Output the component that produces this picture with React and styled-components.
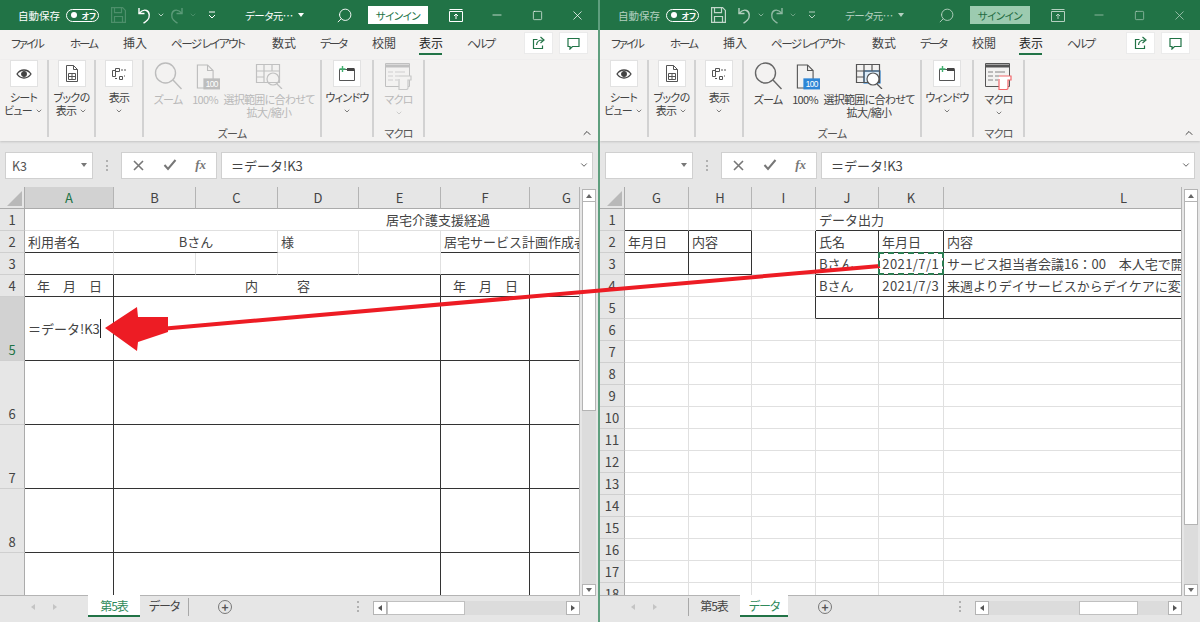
import React from "react";
import styled, { createGlobalStyle } from "styled-components";
import { ChevronDown, ChevronUp, Minus, Search, Square, X } from "lucide-react";

const GREEN = "#217346";
const UI_FONT = `"Noto Sans CJK JP", "Noto Sans", sans-serif`;

const GlobalStyle = createGlobalStyle`
  html, body {
    margin: 0;
    height: 100%;
    overflow: hidden;
    background: #e6e6e6;
    font-family: ${UI_FONT};
  }
`;

const Screen = styled.div`
  position: relative;
  display: flex;
  width: 1200px;
  height: 622px;
  overflow: hidden;
`;

const Win = styled.div`
  display: flex;
  flex-direction: column;
  flex: none;
  width: ${(p) => p.$w}px;
  height: 622px;
  overflow: hidden;
`;

const Divider = styled.div`
  flex: none;
  width: 2px;
  background: #5f9f7e;
`;

/* title bar */
const TitleBar = styled.div`
  display: flex;
  align-items: center;
  flex: none;
  height: 30px;
  padding-left: 18px;
  background: ${GREEN};
  color: ${(p) => (p.$off ? "#b4d0c0" : "#fff")};
  font-size: 11px;
  font-feature-settings: "palt";
  white-space: nowrap;
`;

const AutoSave = styled.span`
  flex: none;
  width: 42px;
  font-size: 10.5px;
`;

const Slot = styled.div`
  display: flex;
  align-items: center;
  justify-content: center;
  flex: none;
  width: ${(p) => p.$w}px;
  height: 30px;
  color: ${(p) => p.$color || "inherit"};
`;

const Toggle = styled.div`
  display: flex;
  align-items: center;
  gap: 5px;
  box-sizing: border-box;
  width: 33px;
  height: 13px;
  padding-left: 4px;
  border: 1px solid #fff;
  border-radius: 7px;
  color: #fff;
  font-size: 8px;
  font-weight: 700;
  &::before {
    content: "";
    width: 6px;
    height: 6px;
    border-radius: 50%;
    background: #fff;
  }
`;

const DocName = styled.div`
  display: flex;
  align-items: center;
  gap: 5px;
  margin-left: 19px;
  font-size: 10.5px;
  letter-spacing: -0.5px;
`;

const SignIn = styled.div`
  display: flex;
  align-items: center;
  justify-content: center;
  flex: none;
  width: 60px;
  height: 18px;
  margin: 0 14px 0 10px;
  background: ${(p) => (p.$off ? "#9ccbb0" : "#fff")};
  color: ${(p) => (p.$off ? "#1f6b42" : GREEN)};
  font-size: 10.5px;
  letter-spacing: -0.5px;
`;

const Spacer = styled.div`
  flex: 1;
`;

const Lens = styled(Search)`
  transform: scaleX(-1);
`;

/* menu tabs */
const MenuRow = styled.div`
  display: flex;
  flex: none;
  gap: 25px;
  height: 30px;
  padding-left: 11px;
  background: #f3f2f1;
  color: #444;
  font-size: 12px;
  font-feature-settings: "palt";
  white-space: nowrap;
`;

const MenuItem = styled.div`
  box-sizing: border-box;
  flex: none;
  width: ${(p) => p.$w}px;
  height: 25px;
  padding-top: 5px;
  line-height: 16px;
  border-bottom: 2px solid ${(p) => (p.$on ? GREEN : "transparent")};
  color: ${(p) => (p.$on ? "#222" : "#444")};
  letter-spacing: ${(p) => p.$tight || 0}px;
  font-size: ${(p) => (p.$tight ? 11.5 : 12)}px;
`;

const MenuActions = styled.div`
  display: flex;
  flex: none;
  gap: 8px;
  margin: 3px 11px 0 auto;
`;

const ActionButton = styled.div`
  display: flex;
  align-items: center;
  justify-content: center;
  width: 27px;
  height: 20px;
  background: #fff;
  box-shadow: 0 0 0 1px #ebebeb;
`;

/* ribbon */
const Ribbon = styled.div`
  position: relative;
  display: flex;
  flex: none;
  box-sizing: border-box;
  height: 81px;
  padding-bottom: 4px;
  background: #f3f2f1;
  box-shadow: 0 1px 2px #c4c4c4;
`;

const Group = styled.div`
  display: flex;
  flex-direction: column;
  flex: none;
  box-sizing: border-box;
  width: ${(p) => p.$w}px;
  border-right: 2px solid #d2d2d2;
`;

const GroupButtons = styled.div`
  display: flex;
  flex: 1;
  padding-left: ${(p) => p.$pad || 0}px;
`;

const GroupName = styled.div`
  height: 12px;
  color: #555;
  font-size: 11px;
  letter-spacing: -0.8px;
  line-height: 16px;
  text-align: center;
  font-feature-settings: "palt";
`;

const RibbonButton = styled.div`
  display: flex;
  flex-direction: column;
  align-items: center;
  flex: none;
  width: ${(p) => p.$w}px;
  color: ${(p) => (p.$off ? "#b9b9b9" : "#444")};
  font-size: 11px;
  letter-spacing: -0.7px;
  line-height: 13px;
  font-feature-settings: "palt";
  white-space: nowrap;
`;

const IconBox = styled.div`
  display: flex;
  align-items: center;
  justify-content: center;
  box-sizing: border-box;
  width: 28px;
  height: 27px;
  margin-bottom: 4px;
  background: #fff;
  border: 1px solid #e2e2e2;
`;

const PlainIcon = styled.div`
  display: flex;
  align-items: center;
  justify-content: center;
  height: 28px;
  margin: 2px 0 3px ${(p) => p.$shift || 0}px;
`;

const LabelLine = styled.div`
  display: flex;
  align-items: center;
  justify-content: center;
  gap: 3px;
  height: 13px;
`;

const Collapse = styled.div`
  display: flex;
  align-self: flex-end;
  margin: 0 5px -2px auto;
  color: #333;
`;

/* formula bar */
const FormulaBar = styled.div`
  display: flex;
  align-items: center;
  flex: none;
  box-sizing: border-box;
  height: 46px;
  padding: 2px 5px 0;
  background: #e6e6e6;
`;

const NameBox = styled.div`
  display: flex;
  align-items: center;
  box-sizing: border-box;
  flex: none;
  width: 88px;
  height: 27px;
  padding: 0 5px 0 6px;
  background: #fff;
  border: 1px solid #d0d0d0;
  color: #555;
  font-size: 12.5px;
`;

const Caret = styled.span`
  width: 0;
  height: 0;
  margin-left: auto;
  border: 3.5px solid transparent;
  border-top: 4px solid #777;
  border-bottom: 0;
`;

const Grip = styled.div`
  flex: none;
  width: 1px;
  height: 11px;
  margin: 0 12px 0 13px;
  border-left: 2px dotted #b0b0b0;
`;

const FxBox = styled.div`
  display: flex;
  align-items: center;
  justify-content: space-between;
  box-sizing: border-box;
  flex: none;
  width: 96px;
  height: 27px;
  padding: 0 10px;
  background: #fff;
  border: 1px solid #d0d0d0;
  color: #777;
`;

const FxLabel = styled.span`
  font-family: "Liberation Serif", serif;
  font-size: 13px;
  font-style: italic;
  font-weight: 700;
`;

const FormulaInput = styled.div`
  display: flex;
  align-items: center;
  justify-content: space-between;
  box-sizing: border-box;
  flex: 1;
  height: 27px;
  margin-left: 4px;
  padding: 0 3px 0 9px;
  background: #fff;
  border: 1px solid #d0d0d0;
  color: #444;
  font-size: 13px;
`;

/* sheet */
const SheetArea = styled.div`
  display: flex;
  flex: 1;
  min-height: 0;
`;

const SheetGrid = styled.div`
  display: grid;
  align-content: start;
  flex: 1;
  min-width: 0;
  grid-template-columns: ${(p) => p.$cols};
  grid-template-rows: ${(p) => p.$rows};
  overflow: hidden;
  background: #fff;
  border-right: 1px solid #b4b4b4;
  border-bottom: 1px solid #b4b4b4;
  color: #444;
  font-size: 13px;
`;

const Corner = styled.div`
  position: relative;
  background: #e6e6e6;
  border-right: 1px solid #ababab;
  border-bottom: 1px solid #ababab;
  &::after {
    content: "";
    position: absolute;
    left: 7px;
    top: 4px;
    width: 15px;
    height: 15px;
    background: #b9b9b9;
    clip-path: polygon(100% 0, 100% 100%, 0 100%);
  }
`;

const ColHead = styled.div`
  display: flex;
  align-items: center;
  justify-content: center;
  background: ${(p) => (p.$on ? "#d2d2d2" : "#e6e6e6")};
  border-right: 1px solid #b4b4b4;
  border-bottom: 1px solid #ababab;
  color: ${(p) => (p.$on ? GREEN : "#444")};
`;

const RowHead = styled.div`
  display: flex;
  align-items: ${(p) => (p.$tall ? "flex-end" : "center")};
  justify-content: center;
  background: ${(p) => (p.$on ? "#d2d2d2" : "#e6e6e6")};
  border-right: 1px solid #ababab;
  border-bottom: 1px solid #cfcfcf;
  color: ${(p) => (p.$on ? GREEN : "#444")};
  line-height: 20px;
`;

const lineColor = { line: "#333", grid: "#e0e0e0", none: "transparent" };

const Cell = styled.div`
  position: relative;
  display: flex;
  align-items: center;
  justify-content: ${(p) => p.$align || "flex-start"};
  grid-column: span ${(p) => p.$span || 1};
  min-width: 0;
  padding: 0 ${(p) => (p.$align === "flex-end" ? 4 : 2)}px 1px 3px;
  overflow: hidden;
  border-right: 1px solid ${(p) => lineColor[p.$r || "grid"]};
  border-bottom: 1px solid ${(p) => lineColor[p.$b || "grid"]};
  letter-spacing: ${(p) => (p.$align === "flex-end" ? 0.4 : 0)}px;
  white-space: nowrap;
  ${(p) =>
    p.$copy &&
    `
    overflow: visible;
    z-index: 1;
    &::after {
      content: "";
      position: absolute;
      inset: -1px -1px -1px -1px;
      border: 2px dashed #2b7d52;
    }
  `}
`;

const Cursor = styled.span`
  flex: none;
  width: 1px;
  height: 19px;
  background: #222;
`;

const VBar = styled.div`
  display: flex;
  flex-direction: column;
  flex: none;
  box-sizing: border-box;
  width: 18px;
  padding: 2px 2px 0 2px;
  background: #e6e6e6;
`;

const ScrollButton = styled.div`
  display: flex;
  align-items: center;
  justify-content: center;
  box-sizing: border-box;
  flex: none;
  width: 14px;
  height: ${(p) => p.$h || 13}px;
  background: #fff;
  border: 1px solid #b4b4b4;
  color: #666;
`;

const VThumb = styled.div`
  box-sizing: border-box;
  flex: none;
  width: 14px;
  height: ${(p) => p.$h}px;
  background: #fff;
  border: 1px solid #b4b4b4;
  border-top: 0;
`;

const VTrack = styled.div`
  flex: 1;
  width: 14px;
  background: #dcdcdc;
`;

const opposite = { top: "bottom", bottom: "top", left: "right", right: "left" };

const Arrow = styled.span`
  width: 0;
  height: 0;
  border: 3px solid transparent;
  border-${(p) => p.$to}: 0;
  border-${(p) => opposite[p.$to]}: 4px solid ${(p) => p.$color || "#555"};
`;

/* sheet tabs */
const TabBar = styled.div`
  display: flex;
  align-items: flex-start;
  flex: none;
  height: 26px;
  background: #e6e6e6;
  color: #444;
  font-size: 12px;
  font-feature-settings: "palt";
`;

const TabNav = styled.div`
  display: flex;
  align-items: center;
  justify-content: center;
  gap: 18px;
  flex: none;
  box-sizing: border-box;
  width: 88px;
  height: 21px;
`;

const SheetTab = styled.div`
  display: flex;
  align-items: center;
  justify-content: center;
  box-sizing: border-box;
  flex: none;
  width: ${(p) => p.$w}px;
  height: ${(p) => (p.$on ? 22 : 21)}px;
  margin-top: ${(p) => (p.$on ? -1 : 0)}px;
  background: ${(p) => (p.$on ? "#fff" : "transparent")};
  border-bottom: 2px solid ${(p) => (p.$on ? GREEN : "transparent")};
  color: ${(p) => (p.$on ? "#2f8a5b" : "#444")};
  letter-spacing: -1.1px;
`;

const TabSep = styled.div`
  flex: none;
  width: 1px;
  height: 18px;
  margin: 2px -1px 0 0;
  background: #a8a8a8;
`;

const AddSheet = styled.div`
  display: flex;
  align-items: center;
  justify-content: center;
  flex: none;
  box-sizing: border-box;
  width: 14px;
  height: 14px;
  margin: 4px 0 0 30px;
  border: 1px solid #777;
  border-radius: 50%;
  color: #555;
  font-size: 12px;
  font-weight: 700;
  line-height: 12px;
`;

const HGrip = styled.div`
  flex: none;
  width: 1px;
  height: 11px;
  margin: 5px 13px 0 0;
  border-left: 2px dotted #b0b0b0;
`;

const HBar = styled.div`
  display: flex;
  flex: none;
  width: 207px;
  height: 14px;
  margin: 5px 18px 0 0;
  background: #dcdcdc;
`;

const HGap = styled.div`
  flex: none;
  width: ${(p) => p.$w}px;
`;

const HThumb = styled.div`
  box-sizing: border-box;
  flex: none;
  width: ${(p) => p.$w}px;
  background: #fff;
  border: 1px solid #c0c0c0;
`;

const Overlay = styled.svg`
  position: absolute;
  left: 0;
  top: 0;
  pointer-events: none;
`;

const Chev = ({ size = 9 }) => <ChevronDown size={size} strokeWidth={2} />;

/* icons */
const SaveIcon = ({ color }) => (
  <svg width="15" height="16" viewBox="0 0 15 16" fill="none" stroke={color} strokeWidth="1.2">
    <path d="M.6.6h11l2.8 2.8v12H.6z" />
    <path d="M3.5.6v5h7v-5M3.500 15.400V9.500h8v5.900" />
  </svg>
);

const UndoIcon = ({ color, flip }) => (
  <svg width="14" height="17" viewBox="0 0 14 17" fill="none" stroke={color} strokeWidth="1.4" transform={flip ? "scale(-1 1)" : undefined}>
    <path d="M2 1v5.500h5.500" />
    <path d="M2 6.500c2.500-3 5-4 7.500-3 3.500 1.500 3.500 7 1 9.500-1 1-2.500 2.500-4 3" />
  </svg>
);

const CustomizeIcon = () => (
  <svg width="8" height="8" viewBox="0 0 8 8" fill="none" stroke="currentColor">
    <path d="M1 1h6M1 4l3 3 3-3" />
  </svg>
);

const DisplayOptionsIcon = ({ color }) => (
  <svg width="14" height="13" viewBox="0 0 14 13" fill="none" stroke={color} strokeWidth="1">
    <path d="M.5 2.500h13v10H.5z" />
    <path d="M.5 .5h13M7 10V5M5 7l2-2 2 2" />
  </svg>
);

const ShareIcon = () => (
  <svg width="14" height="14" viewBox="0 0 14 14" fill="none" stroke={GREEN} strokeWidth="1.2">
    <path d="M5.500 3.500H1.500v9h9v-3" />
    <path d="M4.500 9c.3-3 2.500-5 6-5M8.500 1l3.500 3-3.500 3" />
  </svg>
);

const CommentIcon = () => (
  <svg width="13" height="13" viewBox="0 0 13 13" fill="none" stroke={GREEN} strokeWidth="1.2">
    <path d="M1 1.500h11v8H5.500L3 12V9.500H1z" />
  </svg>
);

const EyeIcon = () => (
  <svg width="16" height="12" viewBox="0 0 16 12" fill="none" stroke="#444" strokeWidth="1.3">
    <path d="M1 6c2-3 4.300-4 7-4s5 1 7 4c-2 3-4.300 4-7 4s-5-1-7-4z" />
    <circle cx="8" cy="6" r="2.300" fill="#444" />
  </svg>
);

const BookIcon = () => (
  <svg width="14" height="17" viewBox="0 0 14 17" fill="none" stroke="#555" strokeWidth="1">
    <path d="M1.500.5h7l4 4v12h-11z" />
    <path d="M8.500.5v4h4" />
    <path d="M3.500 8.500h7v6h-7zM3.500 11.500h7M7 8.500v6" />
  </svg>
);

const ViewsIcon = () => (
  <svg width="16" height="14" viewBox="0 0 16 14" fill="none" stroke="#555" strokeWidth="1">
    <path d="M1.500 3.500h3v6h-3zM4.500 1.500h4v3h-4zM8.500 9.500h3v3h-3z" />
    <path d="M10 3h5M13 9h1M4 11.500h2" strokeDasharray="2 1" />
  </svg>
);

const MagnifierIcon = ({ off }) => {
  const c = off ? "#bcbcbc" : "#666";
  return (
    <svg width="28" height="28" viewBox="0 0 28 28" fill="none" stroke={c} strokeWidth="1.4">
      <circle cx="11.500" cy="11" r="10" />
      <path d="M19 18l8.500 9" />
    </svg>
  );
};

const FullSizeIcon = ({ off }) => {
  const c = off ? "#bcbcbc" : "#555";
  return (
    <svg width="24" height="27" viewBox="0 0 26 28">
      <path d="M1.500 1.500h11l6 6v19h-17z" fill="none" stroke={c} strokeWidth="1.200" />
      <path d="M12.500 1.500v6h6" fill="none" stroke={c} strokeWidth="1.200" />
      <rect x="8" y="16" width="18" height="12" fill={off ? "#bdbdbd" : "#2e86d6"} />
      <text x="17" y="25.500" fill="#fff" fontSize="9" textAnchor="middle" fontFamily="Liberation Sans, sans-serif">
        100
      </text>
    </svg>
  );
};

const FitIcon = ({ off }) => {
  const c = off ? "#c0c0c0" : "#555";
  return (
    <svg width="28" height="26" viewBox="0 0 28 26" fill="none" stroke={c} strokeWidth="1.200">
      {!off && <rect x="9" y="8" width="16" height="12" fill="#dcecf9" stroke="#2e86d6" />}
      <path d="M1.500 1.500h23v18h-23zM1.500 8h23M1.500 14h8M9 1.500v18M17 1.500V8" />
      <circle cx="18" cy="16" r="6" fill={off ? "none" : "#fff"} />
      <path d="M22 21l5 5" />
    </svg>
  );
};

const WindowIcon = () => (
  <svg width="16" height="15" viewBox="0 0 16 15" fill="none">
    <path d="M.5 3.500h15v11H.5z" stroke="#555" />
    <path d="M8 3.500h7.500" stroke="#444" strokeWidth="3" />
    <path d="M3.500 0v6M.5 3h6" stroke="#3fae6d" strokeWidth="1.400" />
  </svg>
);

const MacroIcon = ({ off }) => {
  const c = off ? "#c0c0c0" : "#555";
  const red = off ? "#c8c8c8" : "#f2666a";
  return (
    <svg width="27" height="27" viewBox="0 0 27 27" fill="none" stroke={c}>
      <path d="M.5 .5h24v23H.5z" />
      <path d="M.5 3h24" strokeWidth="3" />
      <path d="M3 9h5M10 9h10M3 13h5M10 13h4M3 17h5M10 17h3" opacity="0.7" />
      <path d="M14 13h12v4h-3v8c0 1-1 1.500-2 1.500h-7V16" fill={off ? "#f3f2f1" : "#fff"} stroke={red} strokeWidth="1.200" />
    </svg>
  );
};

const CancelIcon = () => (
  <svg width="13" height="13" viewBox="0 0 13 13" stroke="#777" strokeWidth="1.600">
    <path d="M2 2l9 9M11 2l-9 9" />
  </svg>
);

const EnterIcon = () => (
  <svg width="14" height="12" viewBox="0 0 14 12" fill="none" stroke="#777" strokeWidth="2">
    <path d="M1.500 6l3.500 4 7.500-9" />
  </svg>
);

/* sheet data */
const blackCell = { r: "line", b: "line" };

const leftSheet = {
  colTemplate: "25px 89px 82px 82px 81px 82px 89px 74px 247px",
  rowTemplate: "22px 22px 22px 22px 22px 64px 64px 64px 64px 64px",
  headers: ["A", "B", "C", "D", "E", "F", "G", ""],
  activeCol: "A",
  activeRow: 5,
  tallFrom: 5,
  rows: [
    [{ t: "居宅介護支援経過", span: 8, align: "center" }],
    [
      { t: "利用者名", b: "line" },
      { t: "Bさん", span: 2, align: "center", b: "line" },
      { t: "様" },
      {},
      { t: "居宅サービス計画作成者", span: 3, b: "line", r: "none" },
    ],
    [{ b: "line" }, { b: "line" }, { b: "line" }, { b: "line" }, { b: "line" }, { b: "line" }, { b: "line", r: "none" }, { b: "line", r: "none" }],
    [
      { t: "年　月　日", align: "center", ...blackCell },
      { t: "内　　　容", span: 4, align: "center", ...blackCell },
      { t: "年　月　日", align: "center", ...blackCell },
      blackCell,
      { b: "line", r: "none" },
    ],
    [
      { t: "＝データ!K3", cursor: true, ...blackCell },
      { span: 4, ...blackCell },
      blackCell,
      blackCell,
      { b: "line", r: "none" },
    ],
    ...[6, 7, 8, 9].map(() => [
      blackCell,
      { span: 4, ...blackCell },
      blackCell,
      blackCell,
      { b: "line", r: "none" },
    ]),
  ],
};

const plainRow = [{}, {}, {}, {}, {}, { r: "none" }];

const rightSheet = {
  colTemplate: "25px 64px 63px 64px 63px 65px 360px",
  rowTemplate: "repeat(19, 22px)",
  headers: ["G", "H", "I", "J", "K", "L"],
  rows: [
    [
      { b: "line" },
      { b: "line" },
      {},
      { t: "データ出力", span: 2, b: "line" },
      { b: "line", r: "none" },
    ],
    [
      { t: "年月日", ...blackCell },
      { t: "内容", ...blackCell },
      { r: "line" },
      { t: "氏名", ...blackCell },
      { t: "年月日", ...blackCell },
      { t: "内容", b: "line", r: "none" },
    ],
    [
      blackCell,
      blackCell,
      { r: "line" },
      { t: "Bさん", ...blackCell },
      { t: "2021/7/1", align: "flex-end", copy: true, ...blackCell },
      { t: "サービス担当者会議16：00　本人宅で開催", b: "line", r: "none" },
    ],
    [
      {},
      {},
      { r: "line" },
      { t: "Bさん", ...blackCell },
      { t: "2021/7/3", align: "flex-end", ...blackCell },
      { t: "来週よりデイサービスからデイケアに変更", b: "line", r: "none" },
    ],
    [{}, {}, { r: "line" }, blackCell, blackCell, { b: "line", r: "none" }],
    ...Array.from({ length: 13 }, () => plainRow),
  ],
};

function Sheet({ data }) {
  return (
    <SheetGrid $cols={data.colTemplate} $rows={data.rowTemplate}>
      <Corner />
      {data.headers.map((h) => (
        <ColHead key={h} $on={h === data.activeCol}>
          {h}
        </ColHead>
      ))}
      {data.rows.map((row, i) => (
        <React.Fragment key={i}>
          <RowHead $on={i + 1 === data.activeRow} $tall={data.tallFrom && i + 1 >= data.tallFrom}>
            {i + 1}
          </RowHead>
          {row.map((c, j) => (
            <Cell key={j} $span={c.span} $align={c.align} $r={c.r} $b={c.b} $copy={c.copy}>
              {c.t}
              {c.cursor && <Cursor />}
            </Cell>
          ))}
        </React.Fragment>
      ))}
    </SheetGrid>
  );
}

function Window({ w, inactive, nameBox, data, vThumb, hStart, hThumb, activeTab }) {
  const off = inactive;
  const iconColor = off ? "#b4d0c0" : "#fff";
  const dimColor = off ? "#8fb8a2" : "#5b9a78";
  const toolsOff = !off;
  return (
    <Win $w={w}>
      <TitleBar $off={off}>
        <AutoSave>自動保存</AutoSave>
        <Slot $w={44} $color="#fff">
          <Toggle>オフ</Toggle>
        </Slot>
        <Slot $w={28}>
          <SaveIcon color={off ? "#c2d8cb" : "#4d8f6b"} />
        </Slot>
        <Slot $w={23}>
          <UndoIcon color={iconColor} />
        </Slot>
        <Slot $w={11}>
          <Chev size={8} />
        </Slot>
        <Slot $w={22}>
          <UndoIcon color={dimColor} flip />
        </Slot>
        <Slot $w={10} $color={dimColor}>
          <Chev size={8} />
        </Slot>
        <Slot $w={28}>
          <CustomizeIcon />
        </Slot>
        <DocName>
          データ元…
          <Arrow $to="bottom" $color={iconColor} />
        </DocName>
        <Spacer />
        <Slot $w={28}>
          <Lens size={17} strokeWidth={1.3} color={iconColor} />
        </Slot>
        <SignIn $off={off}>サインイン</SignIn>
        <Slot $w={28}>
          <DisplayOptionsIcon color={iconColor} />
        </Slot>
        <Slot $w={7} />
        <Slot $w={40}>
          <Minus size={14} strokeWidth={1.2} color={iconColor} />
        </Slot>
        <Slot $w={40}>
          <Square size={11} strokeWidth={1.4} color={iconColor} />
        </Slot>
        <Slot $w={41}>
          <X size={15} strokeWidth={1.2} color={iconColor} />
        </Slot>
      </TitleBar>

      <MenuRow>
        <MenuItem $w={34} $tight={-2}>ファイル</MenuItem>
        <MenuItem $w={28} $tight={-2}>ホーム</MenuItem>
        <MenuItem $w={23}>挿入</MenuItem>
        <MenuItem $w={76} $tight={-1.5}>ページ レイアウト</MenuItem>
        <MenuItem $w={23}>数式</MenuItem>
        <MenuItem $w={27} $tight={-2}>データ</MenuItem>
        <MenuItem $w={22}>校閲</MenuItem>
        <MenuItem $w={23} $on>表示</MenuItem>
        <MenuItem $w={29} $tight={-2}>ヘルプ</MenuItem>
        <MenuActions>
          <ActionButton>
            <ShareIcon />
          </ActionButton>
          <ActionButton>
            <CommentIcon />
          </ActionButton>
        </MenuActions>
      </MenuRow>

      <Ribbon>
        <Group $w={49}>
          <GroupButtons>
            <RibbonButton $w={47}>
              <IconBox>
                <EyeIcon />
              </IconBox>
              <LabelLine>シート</LabelLine>
              <LabelLine>
                ビュー <Chev size={8} />
              </LabelLine>
            </RibbonButton>
          </GroupButtons>
        </Group>
        <Group $w={47}>
          <GroupButtons>
            <RibbonButton $w={45}>
              <IconBox>
                <BookIcon />
              </IconBox>
              <LabelLine>ブックの</LabelLine>
              <LabelLine>
                表示 <Chev size={8} />
              </LabelLine>
            </RibbonButton>
          </GroupButtons>
        </Group>
        <Group $w={48}>
          <GroupButtons>
            <RibbonButton $w={46}>
              <IconBox>
                <ViewsIcon />
              </IconBox>
              <LabelLine>表示</LabelLine>
              <LabelLine>
                <Chev size={8} />
              </LabelLine>
            </RibbonButton>
          </GroupButtons>
        </Group>
        <Group $w={178}>
          <GroupButtons $pad={6}>
            <RibbonButton $w={36} $off={toolsOff}>
              <PlainIcon>
                <MagnifierIcon off={toolsOff} />
              </PlainIcon>
              <LabelLine>ズーム</LabelLine>
            </RibbonButton>
            <RibbonButton $w={38} $off={toolsOff}>
              <PlainIcon $shift={6}>
                <FullSizeIcon off={toolsOff} />
              </PlainIcon>
              <LabelLine>100%</LabelLine>
            </RibbonButton>
            <RibbonButton $w={90} $off={toolsOff}>
              <PlainIcon>
                <FitIcon off={toolsOff} />
              </PlainIcon>
              <LabelLine>選択範囲に合わせて</LabelLine>
              <LabelLine>拡大/縮小</LabelLine>
            </RibbonButton>
          </GroupButtons>
          <GroupName>ズーム</GroupName>
        </Group>
        <Group $w={52}>
          <GroupButtons>
            <RibbonButton $w={50}>
              <IconBox>
                <WindowIcon />
              </IconBox>
              <LabelLine>ウィンドウ</LabelLine>
              <LabelLine>
                <Chev size={8} />
              </LabelLine>
            </RibbonButton>
          </GroupButtons>
        </Group>
        <Group $w={51}>
          <GroupButtons>
            <RibbonButton $w={49} $off={toolsOff}>
              <PlainIcon>
                <MacroIcon off={toolsOff} />
              </PlainIcon>
              <LabelLine>マクロ</LabelLine>
              <LabelLine>
                <Chev size={8} />
              </LabelLine>
            </RibbonButton>
          </GroupButtons>
          <GroupName>マクロ</GroupName>
        </Group>
        <Collapse>
          <ChevronUp size={12} strokeWidth={1.8} />
        </Collapse>
      </Ribbon>

      <FormulaBar>
        <NameBox>
          {nameBox}
          <Caret />
        </NameBox>
        <Grip />
        <FxBox>
          <CancelIcon />
          <EnterIcon />
          <FxLabel>fx</FxLabel>
        </FxBox>
        <FormulaInput>
          ＝データ!K3
          <Chev size={10} />
        </FormulaInput>
      </FormulaBar>

      <SheetArea>
        <Sheet data={data} />
        <VBar>
          <ScrollButton>
            <Arrow $to="top" $color="#666" />
          </ScrollButton>
          <VThumb $h={vThumb} />
          <VTrack />
          <ScrollButton $h={12}>
            <Arrow $to="bottom" $color="#666" />
          </ScrollButton>
        </VBar>
      </SheetArea>

      <TabBar>
        <TabNav>
          <Arrow $to="left" $color="#c4c4c4" />
          <Arrow $to="right" $color="#c4c4c4" />
        </TabNav>
        {activeTab === 2 && <TabSep />}
        <SheetTab $w={52} $on={activeTab === 1}>
          第5表
        </SheetTab>
        <SheetTab $w={48} $on={activeTab === 2}>
          データ
        </SheetTab>
        {activeTab === 1 && <TabSep />}
        <AddSheet>+</AddSheet>
        <Spacer />
        <HGrip />
        <HBar>
          <ScrollButton $h={14}>
            <Arrow $to="left" />
          </ScrollButton>
          <HGap $w={hStart} />
          <HThumb $w={hThumb} />
          <Spacer />
          <ScrollButton $h={14}>
            <Arrow $to="right" />
          </ScrollButton>
        </HBar>
      </TabBar>
    </Win>
  );
}

export default function App() {
  return (
    <Screen>
      <GlobalStyle />
      <Window w={598} nameBox="K3" data={leftSheet} vThumb={209} hStart={0} hThumb={78} activeTab={1} />
      <Divider />
      <Window w={600} inactive nameBox="" data={rightSheet} vThumb={323} hStart={90} hThumb={59} activeTab={2} />
      <Overlay width="1200" height="622" viewBox="0 0 1200 622">
        <path d="M160 329L880 266" stroke="#ed1c24" strokeWidth="4" fill="none" />
        <path d="M105 328L137 307l1 10h30v15l-30 10-1 9z" fill="#ed1c24" />
      </Overlay>
    </Screen>
  );
}
